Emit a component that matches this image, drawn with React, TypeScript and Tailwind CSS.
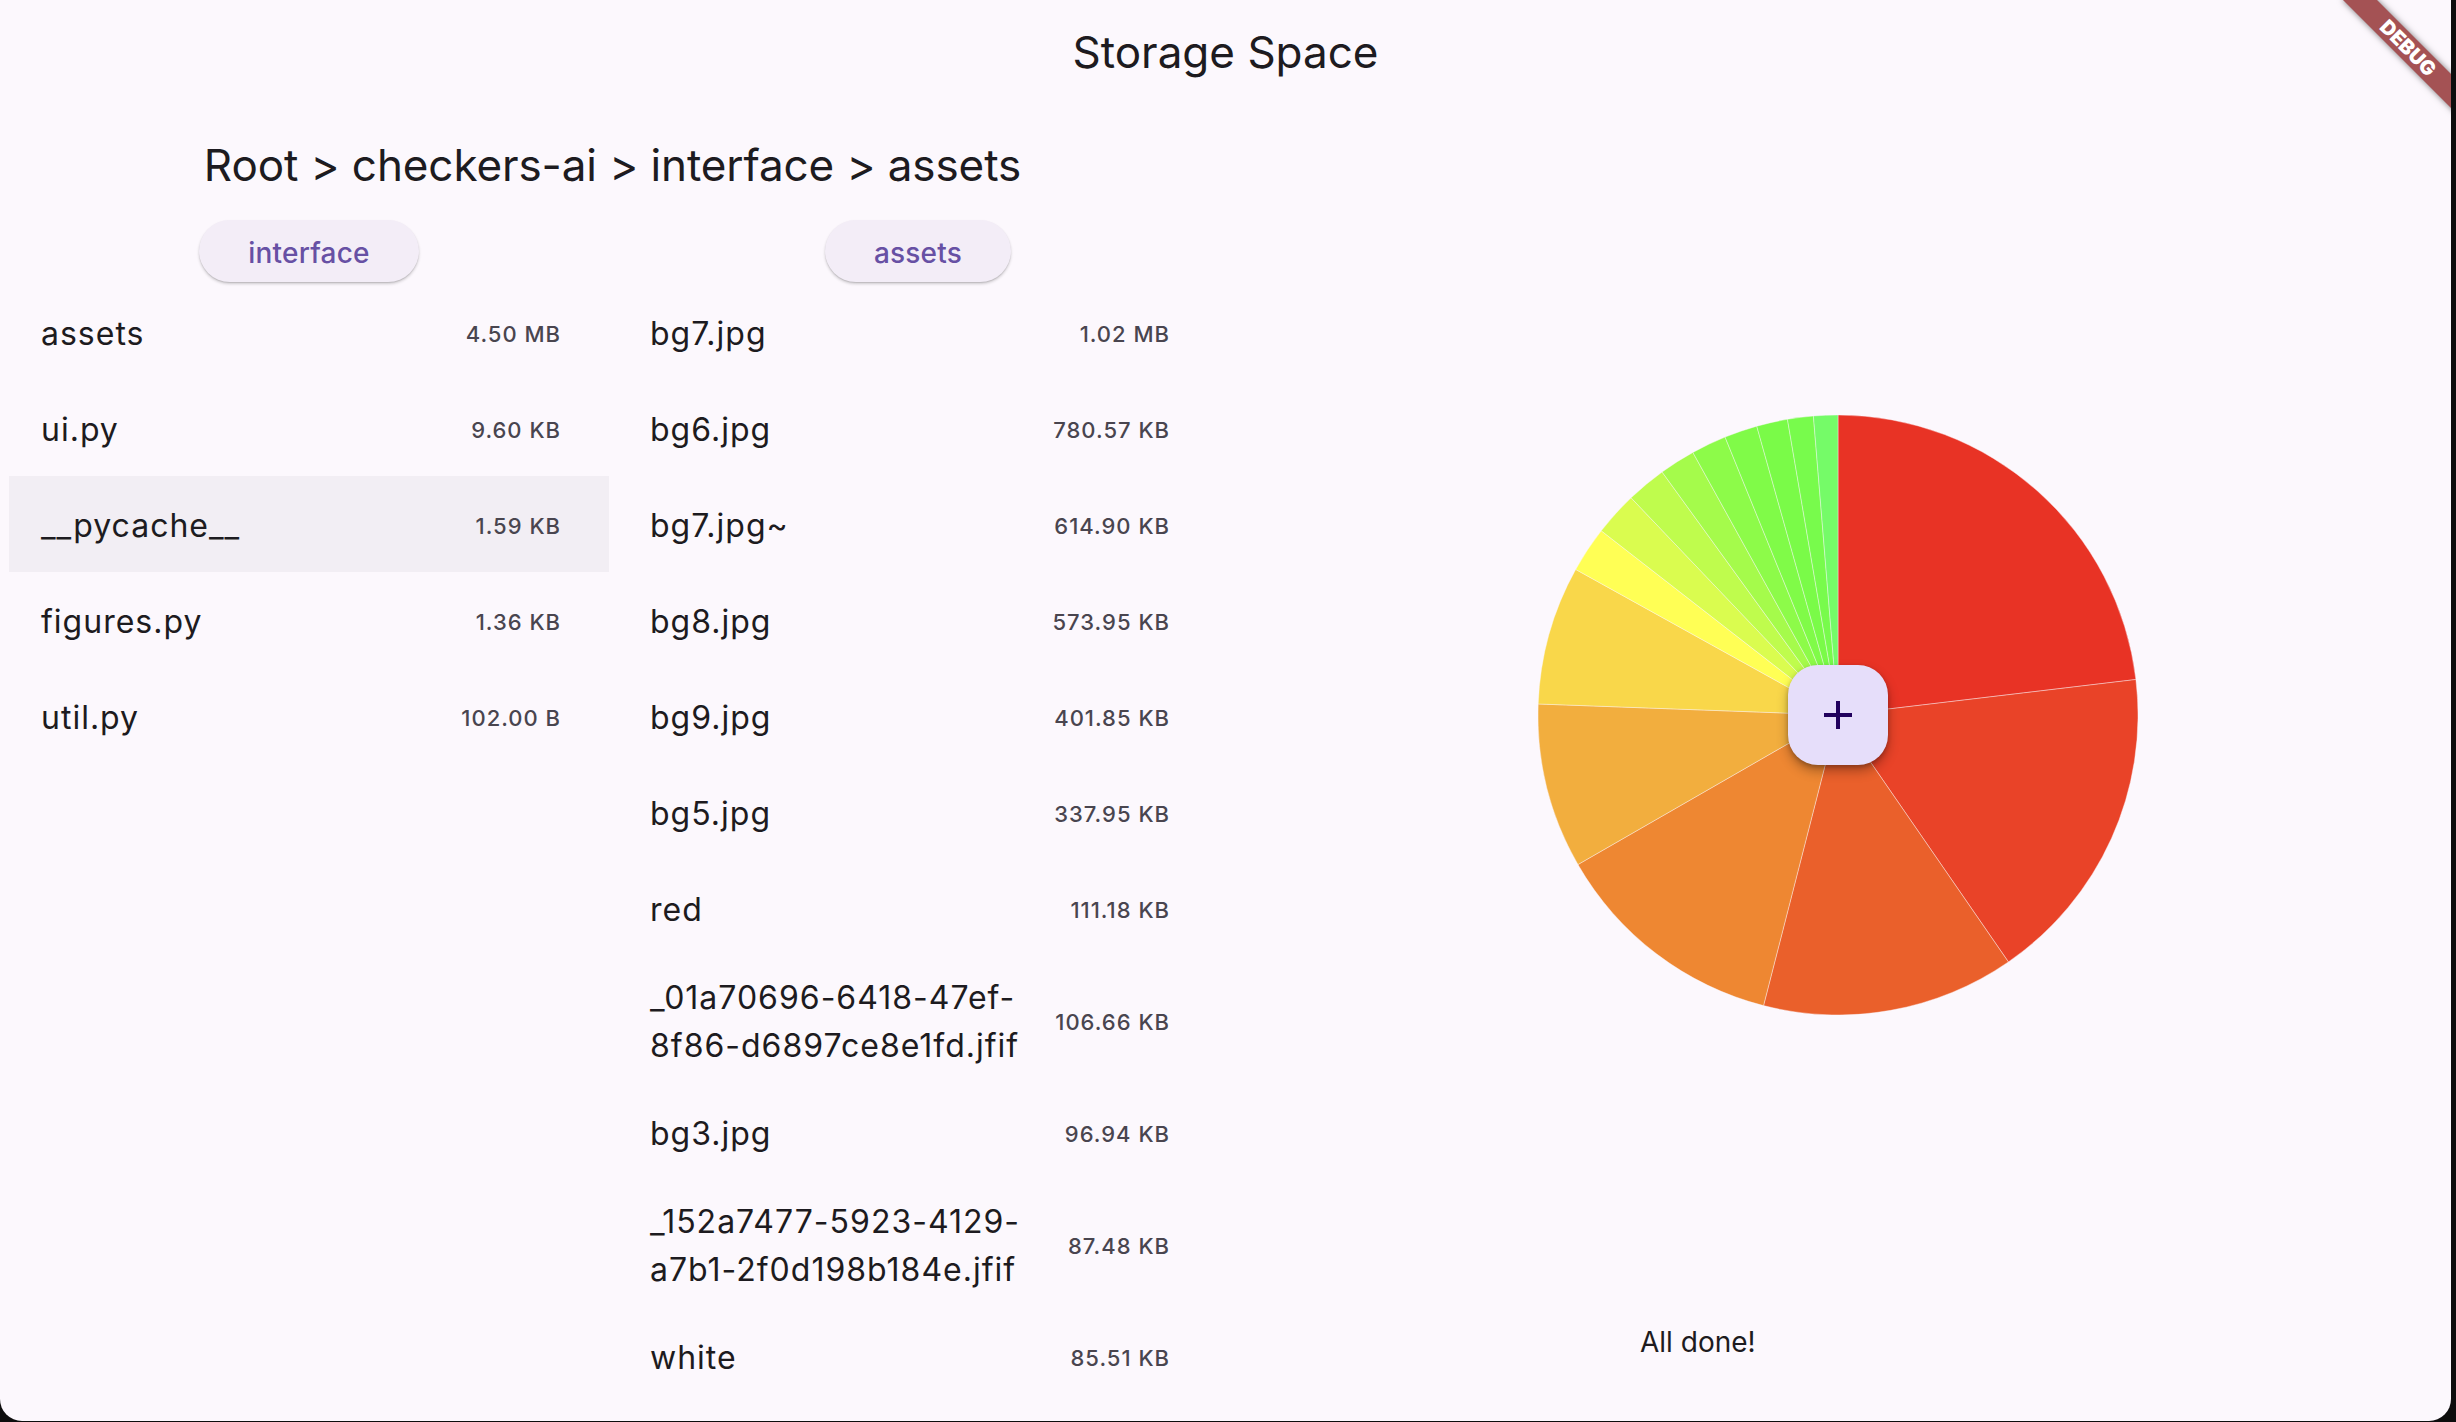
import React from 'react'

type Entry = { name: string, size: string, hover?: boolean }

const PARENT: Entry[] = [
  { name: 'assets', size: '4.50 MB' },
  { name: 'ui.py', size: '9.60 KB' },
  { name: '__pycache__', size: '1.59 KB', hover: true },
  { name: 'figures.py', size: '1.36 KB' },
  { name: 'util.py', size: '102.00 B' },
]

const ASSETS: Entry[] = [
  { name: 'bg7.jpg', size: '1.02 MB' },
  { name: 'bg6.jpg', size: '780.57 KB' },
  { name: 'bg7.jpg~', size: '614.90 KB' },
  { name: 'bg8.jpg', size: '573.95 KB' },
  { name: 'bg9.jpg', size: '401.85 KB' },
  { name: 'bg5.jpg', size: '337.95 KB' },
  { name: 'red', size: '111.18 KB' },
  { name: '_01a70696-6418-47ef-\n8f86-d6897ce8e1fd.jfif', size: '106.66 KB' },
  { name: 'bg3.jpg', size: '96.94 KB' },
  { name: '_152a7477-5923-4129-\na7b1-2f0d198b184e.jfif', size: '87.48 KB' },
  { name: 'white', size: '85.51 KB' },
]

// sizes in KB, same order as the assets list (last few are below the fold)
const SLICES = [
  { kb: 1044.48, color: '#e83325' },
  { kb: 780.57, color: '#e94328' },
  { kb: 614.9, color: '#ea602b' },
  { kb: 573.95, color: '#ee8732' },
  { kb: 401.85, color: '#f2ae3e' },
  { kb: 337.95, color: '#f9d74a' },
  { kb: 111.18, color: '#ffff55' },
  { kb: 106.66, color: '#dafc4f' },
  { kb: 96.94, color: '#bffc4d' },
  { kb: 87.48, color: '#a5fb4b' },
  { kb: 85.51, color: '#8dfb49' },
  { kb: 80.4, color: '#80fb48' },
  { kb: 75.4, color: '#7afb48' },
  { kb: 62.8, color: '#78fb4c' },
  { kb: 59, color: '#75fb68' },
]

function Pie() {
  const total = SLICES.reduce((a, s) => a + s.kb, 0)
  const r = 300
  const c = 300
  let acc = 0
  return (
    <svg width={600} height={600} viewBox="0 0 600 600" className="[grid-area:1/1]">
      {SLICES.map((s, i) => {
        const a0 = (acc / total) * Math.PI * 2
        acc += s.kb
        const a1 = (acc / total) * Math.PI * 2
        const x0 = c + r * Math.sin(a0), y0 = c - r * Math.cos(a0)
        const x1 = c + r * Math.sin(a1), y1 = c - r * Math.cos(a1)
        const large = a1 - a0 > Math.PI ? 1 : 0
        return (
          <path key={i} d={`M${c} ${c} L${x0} ${y0} A${r} ${r} 0 ${large} 1 ${x1} ${y1} Z`}
            fill={s.color} stroke="#fcf8fd" strokeOpacity={0.5} strokeWidth={0.8} />
        )
      })}
    </svg>
  )
}

function Row({ e }: { e: Entry }) {
  const twoLine = e.name.includes('\n')
  return (
    <div className={`flex items-center pl-[32px] pr-[48px] pt-[4px] ${twoLine ? 'h-[128px]' : 'h-[96px]'} ${e.hover ? 'bg-[#f2eef4]' : ''}`}>
      <div className="flex-1 min-w-0 whitespace-pre-line text-[32px] leading-[48px] tracking-[1px] text-[#1d1b20]">{e.name}</div>
      <div className="ml-[16px] text-[22px] font-medium tracking-[1px] text-[#49454f]">{e.size}</div>
    </div>
  )
}

function Column({ label, items }: { label: string, items: Entry[] }) {
  return (
    <div className="w-[600px] flex flex-col">
      <div className="h-[64px] flex justify-center">
        <button className="h-[62px] px-[49px] pt-[3px] rounded-full bg-[#f3edf7] text-[#6750a4] text-[28px] font-medium tracking-[0.2px] shadow-[0_2px_3px_rgba(0,0,0,0.18),0_1px_1px_rgba(0,0,0,0.1)]">
          {label}
        </button>
      </div>
      {items.map((e, i) => <Row key={i} e={e} />)}
    </div>
  )
}

export default function App() {
  return (
    <div className="w-[2456px] h-[1422px] bg-[#0d0d0d] overflow-hidden font-[Inter,sans-serif]">
      <div className="relative w-[2451px] h-[1421px] bg-[#fcf8fd] rounded-b-[22px] overflow-hidden flex flex-col">
        <header className="h-[104px] shrink-0 flex items-center justify-center text-[44px] text-[#1d1b20]">
          Storage Space
        </header>

        <div className="flex flex-1 min-h-0">
          <section className="w-[1225px] flex flex-col">
            <div className="mt-[35px] h-[52px] leading-[52px] text-[44px] tracking-[-0.1px] text-center text-[#1d1b20]">
              Root &gt; checkers-ai &gt; interface &gt; assets
            </div>
            <div className="mt-[29px] flex gap-[9px] pl-[9px]">
              <Column label="interface" items={PARENT} />
              <Column label="assets" items={ASSETS} />
            </div>
          </section>

          <section className="flex-1 flex flex-col">
            <div className="h-[1222px] grid place-items-center">
              <Pie />
              <button className="[grid-area:1/1] w-[100px] h-[100px] rounded-[30px] bg-[#e6defa] flex items-center justify-center shadow-[0_6px_12px_rgba(0,0,0,0.3),0_2px_4px_rgba(0,0,0,0.2)]">
                <svg width={48} height={48} viewBox="0 0 24 24">
                  <path d="M19 13h-6v6h-2v-6H5v-2h6V5h2v6h6v2z" fill="#21005d" />
                </svg>
              </button>
            </div>
            <div className="pl-[415px] h-[32px] leading-[32px] text-[28px] text-[#1d1b20]">All done!</div>
          </section>
        </div>

        <div className="absolute top-[36px] right-[-37px] w-[160px] h-[24px] rotate-45 bg-[#a45254] shadow-[0_0_6px_rgba(0,0,0,0.5)] text-center text-white text-[20px] leading-[24px] font-black">
          DEBUG
        </div>
      </div>
    </div>
  )
}
